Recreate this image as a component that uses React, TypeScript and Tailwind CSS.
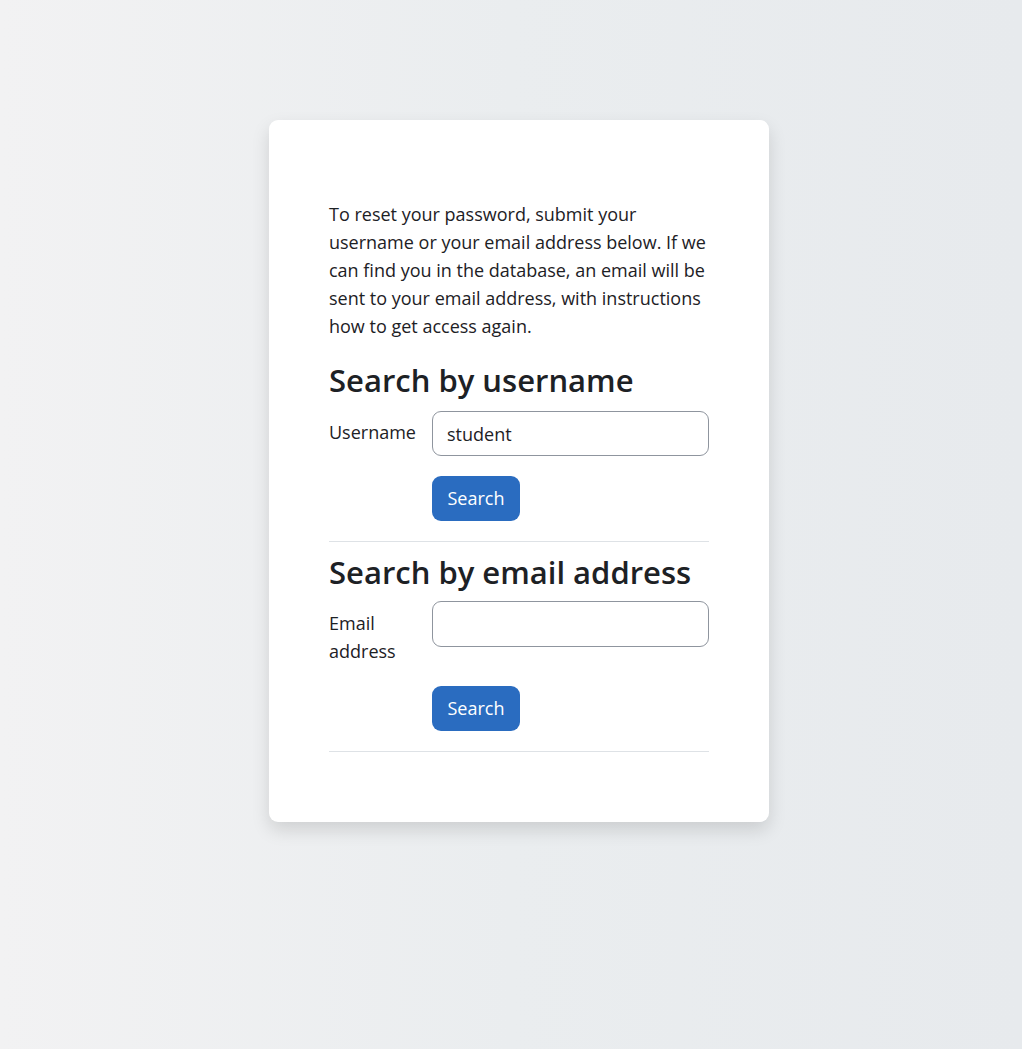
export default function App() {
  return (
    <div className="min-h-[1049px] w-full bg-[linear-gradient(to_right,#f2f2f3,#eaedef_50%,#e7eaed)] font-['Open_Sans',sans-serif] text-[#1d2125]">
      <div className="flex justify-center pl-[16px] pt-[120px]">
        <div className="w-[500px] rounded-[9px] bg-white px-[60px] pb-[70px] pt-[80px] shadow-[0_8px_18px_rgba(0,0,0,0.13)]">
          <p className="text-[18px] leading-[28px]">
            To reset your password, submit your
            <br />
            username or your email address below. If we
            <br />
            can find you in the database, an email will be
            <br />
            sent to your email address, with instructions
            <br />
            how to get access again.
          </p>

          {/* Search by username */}
          <h3 className="mt-[23px] text-[31px] font-semibold leading-[34px]">
            Search by username
          </h3>
          <div className="mt-[14px] grid grid-cols-[103px_1fr]">
            <label className="pt-[7px] text-[18px] leading-[28px]">Username</label>
            <input
              className="h-[45px] rounded-[9px] border border-[#8f959e] px-[14px] text-[18px] outline-none"
              defaultValue="student"
            />
          </div>
          <div className="mt-[20px] grid grid-cols-[103px_1fr]">
            <div />
            <div>
              <button className="h-[45px] w-[88px] rounded-[9px] bg-[#2a6cc0] text-[18px] text-white">
                Search
              </button>
            </div>
          </div>
          <hr className="mt-[20px] border-t border-[#dee2e6]" />

          {/* Search by email */}
          <h3 className="mt-[13px] text-[31px] font-semibold leading-[34px]">
            Search by email address
          </h3>
          <div className="mt-[12px] grid grid-cols-[103px_1fr]">
            <label className="pt-[8px] text-[18px] leading-[28px]">
              Email
              <br />
              address
            </label>
            <input className="h-[46px] rounded-[9px] border border-[#8f959e] px-[14px] text-[18px] outline-none" />
          </div>
          <div className="mt-[21px] grid grid-cols-[103px_1fr]">
            <div />
            <div>
              <button className="h-[45px] w-[88px] rounded-[9px] bg-[#2a6cc0] text-[18px] text-white">
                Search
              </button>
            </div>
          </div>
          <hr className="mt-[20px] border-t border-[#dee2e6]" />
        </div>
      </div>
    </div>
  );
}
